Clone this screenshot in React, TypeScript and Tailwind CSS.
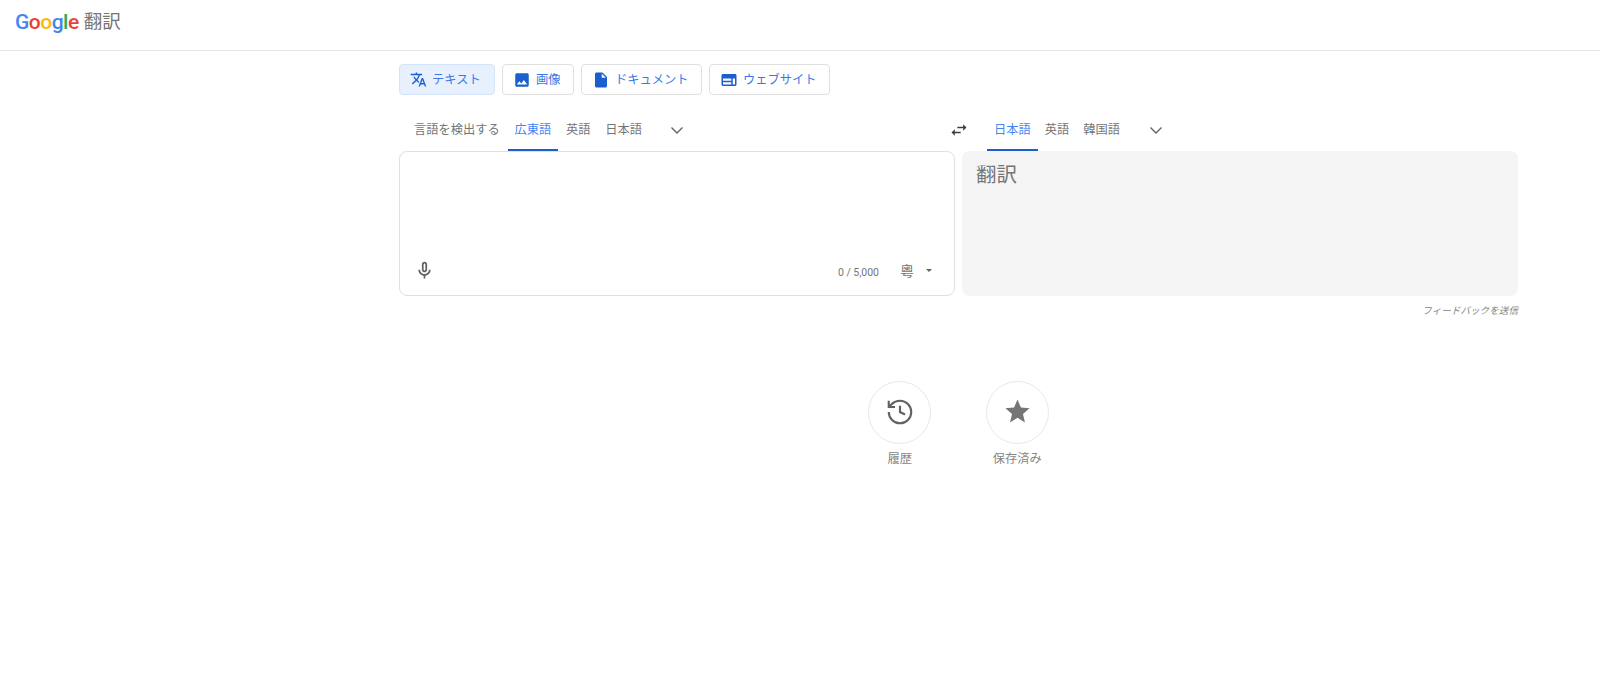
const FONT = "font-['Roboto','Noto_Sans_CJK_JP',sans-serif]";

function Icon({ d, className }: { d: string; className: string }) {
  return (
    <svg viewBox="0 0 24 24" fill="currentColor" className={className}>
      <path d={d} />
    </svg>
  );
}

function Chevron() {
  return (
    <svg viewBox="0 0 24 24" fill="none" stroke="#5f6368" strokeWidth="1.4" className="w-6 h-6">
      <path d="M6.500 9.500L12 15l5.500-5.500" />
    </svg>
  );
}

const modes = [
  { label: 'テキスト', w: 'w-[96px]', active: true, size: 'w-[17px] h-[17px]', d: 'M12.87 15.07l-2.54-2.51.03-.03c1.74-1.94 2.98-4.17 3.71-6.53H17V4h-7V2H8v2H1v1.99h11.17C11.5 7.92 10.44 9.75 9 11.35 8.07 10.32 7.3 9.19 6.69 8h-2c.73 1.63 1.73 3.17 2.98 4.56l-5.09 5.02L4 19l5-5 3.11 3.11.76-2.04zM18.5 10h-2L12 22h2l1.120-3h4.750L21 22h2l-4.500-12zm-2.620 7l1.620-4.330L19.120 17h-3.240z' },
  { label: '画像', w: 'w-[72px]', active: false, size: 'w-[18px] h-[18px]', d: 'M21 19V5c0-1.100-.9-2-2-2H5c-1.100 0-2 .9-2 2v14c0 1.100.9 2 2 2h14c1.100 0 2-.9 2-2zM8.500 13.500l2.500 3.010L14.500 12l4.500 6H5l3.500-4.500z' },
  { label: 'ドキュメント', w: 'w-[121px]', active: false, size: 'w-[18px] h-[18px]', d: 'M6 2c-1.100 0-1.990.9-1.990 2L4 20c0 1.100.89 2 1.990 2H18c1.100 0 2-.9 2-2V8l-6-6H6zm7 7V3.500L18.500 9H13z' },
  { label: 'ウェブサイト', w: 'w-[121px]', active: false, size: 'w-[18px] h-[18px]', d: 'M20 4H4c-1.100 0-2 .9-2 2v12c0 1.100.9 2 2 2h16c1.100 0 2-.9 2-2V6c0-1.100-.9-2-2-2zm-5 14H4v-3h11v3zm0-5H4v-3h11v3zm5 5h-3v-8h3v8z' },
];

function LangTab({ label, active }: { label: string; active?: boolean }) {
  return (
    <div className={`h-[42px] px-[7px] pt-[3px] flex items-center text-[12.250px] border-b-2 ${active ? 'text-[#4285f4] border-[#1a5fd0]' : 'text-[#757575] border-transparent'}`}>
      {label}
    </div>
  );
}

function Shortcut({ label, children }: { label: string; children: React.ReactNode }) {
  return (
    <div className="w-[117.500px] flex flex-col items-center">
      <div className="w-[63px] h-[63px] rounded-full border border-[#e8e8e8] flex items-center justify-center text-[#616161]">
        {children}
      </div>
      <div className="mt-[7px] text-[12.250px] leading-[16px] text-[#858585]">{label}</div>
    </div>
  );
}

export default function App() {
  return (
    <div className={`min-h-[696px] bg-white ${FONT}`}>
      <header className="h-[51px] border-b border-[#e4e6e8] pl-[15px] pt-[8px] flex items-start">
        <div className="text-[21px] leading-[28px] font-['Roboto',sans-serif] font-medium tracking-[-0.500px]">
          <span className="text-[#4285f4]">G</span>
          <span className="text-[#ea4335]">o</span>
          <span className="text-[#fbbc05]">o</span>
          <span className="text-[#4285f4]">g</span>
          <span className="text-[#34a853]">l</span>
          <span className="text-[#ea4335]">e</span>
        </div>
        <span className="ml-[5px] text-[18.500px] leading-[28px] text-[#757575]">翻訳</span>
      </header>

      <main className="ml-[399px] w-[1119px]">
        <div className="pt-[13px] flex gap-[7px]">
          {modes.map((m) => (
            <div
              key={m.label}
              className={`h-[31px] ${m.w} pl-[10px] rounded-[4px] border flex items-center gap-[5px] text-[12.250px] text-[#3b78e7] ${m.active ? 'bg-[#e8f0fe] border-[#d2e3fc]' : 'bg-white border-[#e0e0e0]'}`}
            >
              <Icon d={m.d} className={`${m.size} text-[#1a5fd0]`} />
              <span className="pt-[1px]">{m.label}</span>
            </div>
          ))}
        </div>

        <div className="mt-[14px] flex h-[42px]">
          <div className="w-[547.500px] pl-[8px] flex gap-[0.750px]">
            <LangTab label="言語を検出する" />
            <LangTab label="広東語" active />
            <LangTab label="英語" />
            <LangTab label="日本語" />
            <div className="ml-[15px] flex items-center">
              <Chevron />
            </div>
          </div>
          <div className="w-6 flex items-center justify-center">
            <Icon d="M6.990 11L3 15l3.990 4v-3H14v-2H6.990v-3zM21 9l-3.990-4v3H10v2h7.010v3L21 9z" className="w-[20px] h-[20px] text-[#3c4043]" />
          </div>
          <div className="ml-[16.500px] flex">
            <LangTab label="日本語" active />
            <LangTab label="英語" />
            <LangTab label="韓国語" />
            <div className="ml-[17px] flex items-center">
              <Chevron />
            </div>
          </div>
        </div>

        <div className="flex gap-[7px]">
          <div className="w-[556px] h-[145px] rounded-[8px] border border-[#e0e0e0] flex flex-col justify-end pb-[14px] pl-[14px] pr-[22px]">
            <div className="flex items-center h-[21px]">
              <Icon d="M12 14c1.660 0 3-1.340 3-3V5c0-1.660-1.340-3-3-3S9 3.340 9 5v6c0 1.660 1.340 3 3 3zm-1-9c0-.55.45-1 1-1s1 .45 1 1v6c0 .55-.45 1-1 1s-1-.45-1-1V5zm6 6c0 2.760-2.240 5-5 5s-5-2.240-5-5H5c0 3.530 2.610 6.430 6 6.920V21h2v-3.080c3.390-.49 6-3.390 6-6.920h-2z" className="w-[21px] h-[21px] text-[#5f6368]" />
              <span className="ml-auto mt-[4px] text-[10.500px] text-[#757575]">0 / 5,000</span>
              <span className="ml-[21px] mt-[2px] text-[14px] text-[#757575]">粵</span>
              <span className="ml-[12px] mb-[1px] w-0 h-0 border-x-[3px] border-x-transparent border-t-[3.500px] border-t-[#5f6368]" />
            </div>
          </div>
          <div className="w-[556px] h-[145px] rounded-[8px] bg-[#f5f5f5] pl-[14px] pt-[10px] text-[20.500px] leading-[28px] text-[#757575]">
            翻訳
          </div>
        </div>

        <div className="mt-[8px] text-right text-[9.600px] leading-[14px] italic text-[#858585]">フィードバックを送信</div>

        <div className="mt-[63px] flex justify-center">
          <Shortcut label="履歴">
            <svg viewBox="0 0 24 24" fill="none" stroke="currentColor" strokeWidth="1.700" className="w-[30px] h-[30px] -translate-y-[1px]">
              <path d="M3 12a9 9 0 1 0 9-9 9.750 9.750 0 0 0-6.740 2.740L3 8" />
              <path d="M3 3v5h5" />
              <path d="M12 7v5l4 2" />
            </svg>
          </Shortcut>
          <Shortcut label="保存済み">
            <Icon d="M12 17.270L18.180 21l-1.640-7.030L22 9.240l-7.190-.61L12 2 9.190 8.630 2 9.240l5.460 4.730L5.820 21z" className="w-[29px] h-[29px] text-[#757575] -translate-y-[1px]" />
          </Shortcut>
        </div>
      </main>
    </div>
  );
}
